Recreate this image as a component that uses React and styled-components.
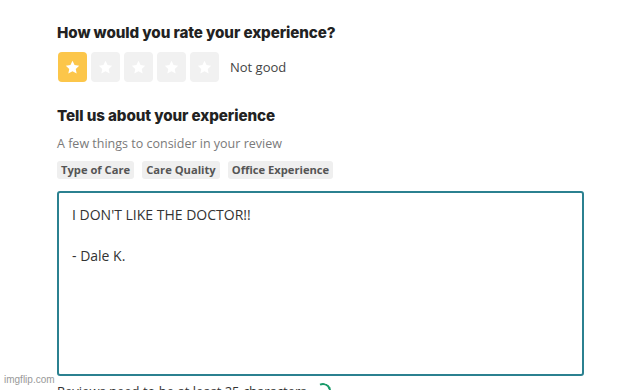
import React, { useState } from "react";
import styled, { createGlobalStyle } from "styled-components";

const GlobalStyle = createGlobalStyle`
  html, body {
    margin: 0;
    padding: 0;
    background: #fff;
    overflow: hidden;
  }
  body {
    font-family: "Open Sans", "Liberation Sans", sans-serif;
    color: #333;
  }
`;

const labels = ["Not good", "Could be better", "Okay", "Good", "Great"];
const tags = ["Type of Care", "Care Quality", "Office Experience"];

const StarIcon = () => (
  <svg width="17" height="17" viewBox="0 0 24 24" fill="#fff">
    <path d="M12 2.5l2.9 6.1 6.6.8-4.9 4.6 1.3 6.6L12 17.3l-5.9 3.3 1.3-6.6-4.9-4.6 6.6-.8z" />
  </svg>
);

const App = () => {
  const [rating, setRating] = useState(1);
  const [text, setText] = useState("I DON'T LIKE THE DOCTOR!!\n\n- Dale K.");

  return (
    <Page>
      <GlobalStyle />
      <Heading>How would you rate your experience?</Heading>
      <RatingRow>
        <Stars>
          {[1, 2, 3, 4, 5].map((n) => (
            <StarBox key={n} $active={n <= rating} onClick={() => setRating(n)}>
              <StarIcon />
            </StarBox>
          ))}
        </Stars>
        <RatingLabel>{labels[rating - 1]}</RatingLabel>
      </RatingRow>

      <Heading $top={25}>Tell us about your experience</Heading>
      <Hint>A few things to consider in your review</Hint>
      <Tags>
        {tags.map((t) => (
          <Tag key={t}>{t}</Tag>
        ))}
      </Tags>

      <Review value={text} onChange={(e) => setText(e.target.value)} />
      <Footer>
        Reviews need to be at least 25 characters
        <Check />
      </Footer>

      <Watermark>imgflip.com</Watermark>
    </Page>
  );
};

const Page = styled.div`
  position: relative;
  height: 390px;
  padding: 24px 0 0 57px;
  box-sizing: border-box;
`;

const Heading = styled.h2`
  margin: ${(p) => p.$top || 0}px 0 0;
  font-family: "Inter", "DejaVu Sans", sans-serif;
  font-weight: 800;
  font-size: 15.2px;
  line-height: 18px;
  color: #222;
  letter-spacing: -0.1px;
`;

const RatingRow = styled.div`
  display: flex;
  align-items: center;
  margin-top: 10px;
`;

const Stars = styled.div`
  display: flex;
  gap: 4px;
  margin-left: 1px;
`;

const StarBox = styled.button`
  width: 29px;
  height: 30px;
  border: none;
  padding: 0;
  border-radius: 4px;
  background: ${(p) => (p.$active ? "#fcc64a" : "#f1f1f1")};
  display: flex;
  align-items: center;
  justify-content: center;
  cursor: pointer;
`;

const RatingLabel = styled.span`
  margin-left: 11px;
  font-size: 13px;
  color: #444;
`;

const Hint = styled.p`
  margin: 10px 0 0;
  font-size: 12.5px;
  color: #7a7a7a;
  line-height: 17px;
`;

const Tags = styled.div`
  display: flex;
  gap: 8px;
  margin-top: 9px;
`;

const Tag = styled.span`
  background: #efefef;
  color: #555;
  font-weight: 700;
  font-size: 11.2px;
  line-height: 18px;
  padding: 0 4px;
  border-radius: 3px;
`;

const Review = styled.textarea`
  display: block;
  margin-top: 12px;
  width: 527px;
  height: 185px;
  box-sizing: border-box;
  border: 2px solid #2b8190;
  border-radius: 3px;
  padding: 12px 13px;
  font-family: "Open Sans", "Liberation Sans", sans-serif;
  font-size: 14px;
  line-height: 20.5px;
  color: #333;
  resize: none;
  outline: none;
`;

const Footer = styled.div`
  display: flex;
  align-items: center;
  gap: 8px;
  margin-top: 6px;
  font-size: 13px;
  color: #333;
`;

const Check = styled.span`
  width: 12px;
  height: 12px;
  border-radius: 50%;
  border: 2px solid #1a9a6a;
  border-left-color: transparent;
  border-bottom-color: transparent;
  transform: rotate(20deg);
`;

const Watermark = styled.div`
  position: absolute;
  left: 4px;
  top: 374px;
  font-family: "Liberation Sans", sans-serif;
  font-size: 10px;
  color: #999;
`;

export default App;
